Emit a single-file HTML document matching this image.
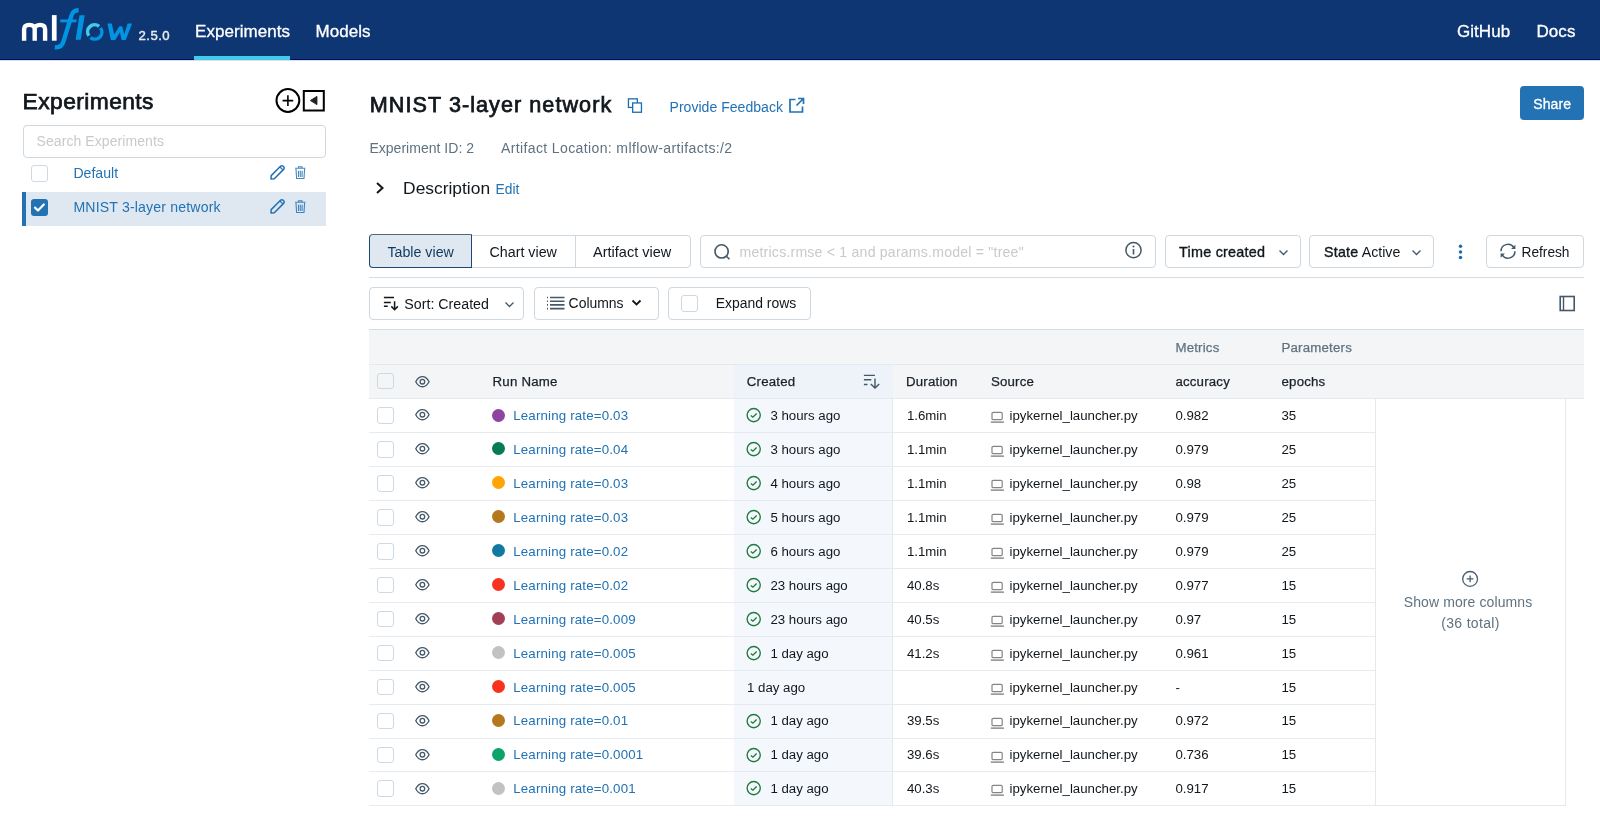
<!DOCTYPE html>
<html><head><meta charset="utf-8">
<style>
html,body{margin:0;padding:0;width:1600px;height:827px;overflow:hidden;background:#fff;}
body{will-change:transform;font-family:"Liberation Sans", sans-serif;position:relative;}
.t{position:absolute;line-height:1;white-space:nowrap;}
.b{position:absolute;box-sizing:border-box;}
svg{position:absolute;overflow:visible;}
</style></head><body>
<div class="b" style="left:0px;top:0px;width:1600px;height:60px;background:#0d3673;"></div>
<div class="b" style="left:0px;top:59px;width:1600px;height:1px;background:#020f62;"></div>
<div class="b" style="left:0px;top:60px;width:1600px;height:1px;background:#d9dee6;"></div>
<svg style="left:0;top:0" width="200" height="60" viewBox="0 0 200 60">
<path d="M24.1 40.7 V29.3 C24.1 26.4 26.2 24.9 29.3 24.9 C32.5 24.9 34.7 26.4 34.7 29.3 V40.7 M34.7 29.3 C34.7 26.4 36.9 24.9 40 24.9 C43.1 24.9 45.1 26.4 45.1 29.3 V40.7" fill="none" stroke="#fff" stroke-width="4.4"/>
<rect x="51.9" y="15.1" width="4.7" height="25.6" fill="#fff"/>
<g fill="none" stroke="#0194e2">
<path d="M54.8 47.3 C59.5 47.8 62.3 45.8 63.6 41 L71.3 16.2 C72.6 11.8 74.3 10.2 78.6 10.3" stroke-width="4.4"/>
<path d="M60.2 20.9 H76.4" stroke-width="2.9"/>
</g>
<polygon points="79.5,15.2 84.7,15.2 80.7,39.8 75.6,39.8" fill="#0194e2"/>
<polygon points="107.4,23.5 111.8,23.5 114.2,34.6 119.4,26.2 122.2,26.2 124.3,34.6 127.6,23.5 132.1,23.5 125.8,40 121.6,40 119.9,32.2 115.3,40 110.9,40" fill="#0194e2"/>
<g fill="none" stroke-width="3.5">
<path d="M99.1 26.4 A7 7 0 0 0 88.9 35.8" stroke="#43c9ed"/>
<path d="M90.5 37.6 A7 7 0 0 0 100.5 28" stroke="#0194e2"/>
</g>
</svg>
<div class="t" style="left:138.5px;top:29.43px;font-size:13.2px;color:#e8ecf1;letter-spacing:0.45px;-webkit-text-stroke:0.4px #e8ecf1;">2.5.0</div>
<div class="t" style="left:195px;top:23.11px;font-size:17.0px;color:#ffffff;letter-spacing:0.05px;-webkit-text-stroke:0.3px #ffffff;">Experiments</div>
<div class="b" style="left:194px;top:56px;width:96px;height:4px;background:#43c9ed;"></div>
<div class="t" style="left:315.5px;top:23.11px;font-size:17.0px;color:#ffffff;letter-spacing:0.05px;-webkit-text-stroke:0.3px #ffffff;">Models</div>
<div class="t" style="left:1457px;top:23.11px;font-size:17.0px;color:#ffffff;letter-spacing:0.05px;-webkit-text-stroke:0.3px #ffffff;">GitHub</div>
<div class="t" style="left:1536.5px;top:23.11px;font-size:17.0px;color:#ffffff;letter-spacing:0.05px;-webkit-text-stroke:0.3px #ffffff;">Docs</div>
<div class="t" style="left:22.6px;top:90.30px;font-size:22.8px;color:#11171c;letter-spacing:0.42px;-webkit-text-stroke:0.75px #11171c;">Experiments</div>
<svg style="left:270px;top:84px" width="60" height="32" viewBox="270 84 60 32">
<circle cx="287.9" cy="100.5" r="11.4" fill="none" stroke="#000" stroke-width="2"/>
<path d="M282.6 100.6 H293.2 M287.9 95.3 V106" stroke="#000" stroke-width="1.6"/>
<rect x="303.8" y="91" width="20" height="19.5" fill="none" stroke="#000" stroke-width="2"/>
<path d="M317 96.3 L310.3 100.5 L317 104.7 Z" fill="#222" stroke="#222" stroke-width="0.8" stroke-linejoin="round"/>
</svg>
<div class="b" style="left:22.5px;top:124.5px;width:303.5px;height:33px;border:1px solid #cdd8e1;border-radius:4px;"></div>
<div class="t" style="left:36.5px;top:134.15px;font-size:14px;color:#c9c9c9;letter-spacing:0.08px;">Search Experiments</div>
<div class="b" style="left:31px;top:165px;width:16.5px;height:16.5px;border:1px solid #cdd9e4;border-radius:3px;background:#fff;"></div>
<div class="t" style="left:73.4px;top:165.86px;font-size:14.1px;color:#2272b4;">Default</div>
<div class="b" style="left:22px;top:192px;width:304px;height:33.5px;background:#dfe8f1;border-left:4px solid #2272b4;"></div>
<div class="b" style="left:31px;top:199px;width:16.5px;height:16.5px;background:#2272b4;border-radius:3px;"></div>
<svg style="left:31px;top:199px" width="17" height="17" viewBox="0 0 17 17"><path d="M4 8.6 L7 11.5 L12.8 5.5" fill="none" stroke="#fff" stroke-width="2.2" stroke-linecap="round" stroke-linejoin="round"/></svg>
<div class="t" style="left:73.4px;top:200.16px;font-size:14.1px;color:#2272b4;letter-spacing:0.17px;">MNIST 3-layer network</div>
<svg style="left:268px;top:164px" width="40" height="18" viewBox="0 0 40 18">
<path d="M3.2 11.6 L12.5 2.3 A1.9 1.9 0 0 1 15.2 2.3 L15.6 2.7 A1.9 1.9 0 0 1 15.6 5.4 L6.3 14.7 L3 15 Z" fill="none" stroke="#2272b4" stroke-width="1.5" stroke-linejoin="round"/>
<path d="M12 3 L14.8 5.8" stroke="#2272b4" stroke-width="1.2"/>
<path d="M27 4.2 H37.5 M30.5 4 V2.8 H34 V4 M28 5 L28.6 14.5 H36 L36.6 5 M30.5 6.8 V13 M32.3 6.8 V13 M34.1 6.8 V13" fill="none" stroke="#2272b4" stroke-width="1.1" opacity="0.85"/>
</svg>
<svg style="left:268px;top:197.8px" width="40" height="18" viewBox="0 0 40 18">
<path d="M3.2 11.6 L12.5 2.3 A1.9 1.9 0 0 1 15.2 2.3 L15.6 2.7 A1.9 1.9 0 0 1 15.6 5.4 L6.3 14.7 L3 15 Z" fill="none" stroke="#2272b4" stroke-width="1.5" stroke-linejoin="round"/>
<path d="M12 3 L14.8 5.8" stroke="#2272b4" stroke-width="1.2"/>
<path d="M27 4.2 H37.5 M30.5 4 V2.8 H34 V4 M28 5 L28.6 14.5 H36 L36.6 5 M30.5 6.8 V13 M32.3 6.8 V13 M34.1 6.8 V13" fill="none" stroke="#2272b4" stroke-width="1.1" opacity="0.85"/>
</svg>
<div class="t" style="left:369.8px;top:93.92px;font-size:21.6px;color:#11171c;letter-spacing:1.05px;-webkit-text-stroke:0.75px #11171c;">MNIST 3-layer network</div>
<svg style="left:626px;top:97px" width="18" height="18" viewBox="0 0 18 18">
<rect x="2.45" y="1.85" width="8.9" height="8.6" fill="none" stroke="#1b6db3" stroke-width="1.3"/>
<rect x="6.65" y="5.95" width="8.8" height="9.3" fill="#fff" stroke="#1b6db3" stroke-width="1.3"/>
</svg>
<div class="t" style="left:669.5px;top:99.88px;font-size:14.08px;color:#2272b4;">Provide Feedback</div>
<svg style="left:788px;top:97px" width="18" height="18" viewBox="0 0 18 18">
<path d="M7.5 2.5 H2 V15 H14.5 V9.5" fill="none" stroke="#2272b4" stroke-width="1.7"/>
<path d="M8.5 8.5 L15.5 1.5 M10 1.5 H15.5 V7" fill="none" stroke="#2272b4" stroke-width="1.7"/>
</svg>
<div class="b" style="left:1520px;top:86px;width:64px;height:33.5px;background:#2272b4;border-radius:4px;"></div>
<div class="t" style="left:1533.2px;top:96.55px;font-size:14.0px;color:#ffffff;letter-spacing:0.15px;-webkit-text-stroke:0.3px #ffffff;">Share</div>
<div class="t" style="left:369.4px;top:140.91px;font-size:14.05px;color:#5f7281;">Experiment ID: 2</div>
<div class="t" style="left:501px;top:140.91px;font-size:14.05px;color:#5f7281;letter-spacing:0.36px;">Artifact Location: mlflow-artifacts:/2</div>
<svg style="left:372px;top:180px" width="16" height="16" viewBox="0 0 16 16"><path d="M5 3 L10.5 8 L5 13" fill="none" stroke="#11171c" stroke-width="2"/></svg>
<div class="t" style="left:403.1px;top:180.27px;font-size:17.4px;color:#11171c;">Description</div>
<div class="t" style="left:495.6px;top:183.32px;font-size:13.8px;color:#2272b4;">Edit</div>
<div class="b" style="left:369px;top:234.5px;width:322px;height:33.5px;border:1px solid #cdd8e1;border-radius:4px;"></div>
<div class="b" style="left:575px;top:234.5px;width:1px;height:33.5px;background:#cdd8e1;"></div>
<div class="b" style="left:369px;top:234.2px;width:103px;height:33.8px;background:#dfe8f1;border:1.5px solid #1b4a74;border-top:1.8px solid #56677a;border-radius:4px 0 0 4px;"></div>
<div class="t" style="left:387.4px;top:244.95px;font-size:14.24px;color:#0e3a5f;">Table view</div>
<div class="t" style="left:489.5px;top:244.92px;font-size:14.27px;color:#11171c;">Chart view</div>
<div class="t" style="left:593.1px;top:244.73px;font-size:14.5px;color:#11171c;">Artifact view</div>
<div class="b" style="left:700.4px;top:234.5px;width:455.3px;height:33.5px;border:1px solid #cdd8e1;border-radius:4px;"></div>
<svg style="left:712px;top:242px" width="20" height="20" viewBox="0 0 20 20"><circle cx="9.6" cy="9.4" r="6.6" fill="none" stroke="#445868" stroke-width="1.6"/><path d="M14.3 14.2 L17.5 17.3" stroke="#445868" stroke-width="1.6"/></svg>
<div class="t" style="left:739.5px;top:244.76px;font-size:14.1px;color:#c9c9c9;letter-spacing:0.21px;">metrics.rmse &lt; 1 and params.model = "tree"</div>
<svg style="left:1124px;top:241px" width="20" height="20" viewBox="0 0 20 20"><circle cx="9.5" cy="9.2" r="7.6" fill="none" stroke="#445868" stroke-width="1.5"/><path d="M9.5 8 V13.5" stroke="#445868" stroke-width="1.6"/><circle cx="9.5" cy="5.6" r="1" fill="#445868"/></svg>
<div class="b" style="left:1164.7px;top:234.5px;width:136px;height:33.5px;border:1px solid #cdd8e1;border-radius:4px;"></div>
<div class="t" style="left:1179.1px;top:244.81px;font-size:14.4px;color:#11171c;letter-spacing:0.22px;-webkit-text-stroke:0.35px #11171c;">Time created</div>
<svg style="left:1277.5px;top:248.5px" width="12" height="8" viewBox="0 0 12 8"><path d="M1.5 1.5 L5.5 5.5 L9.5 1.5" fill="none" stroke="#445868" stroke-width="1.3"/></svg>
<div class="b" style="left:1309.3px;top:234.5px;width:124.5px;height:33.5px;border:1px solid #cdd8e1;border-radius:4px;"></div>
<div class="t" style="left:1323.9px;top:244.98px;font-size:14.2px;color:#11171c;"><span style="-webkit-text-stroke:0.35px #11171c;letter-spacing:0.3px">State</span> Active</div>
<svg style="left:1411px;top:248.5px" width="12" height="8" viewBox="0 0 12 8"><path d="M1.5 1.5 L5.5 5.5 L9.5 1.5" fill="none" stroke="#445868" stroke-width="1.3"/></svg>
<svg style="left:1455px;top:242px" width="10" height="20" viewBox="0 0 10 20"><circle cx="5.5" cy="4.25" r="1.75" fill="#1b6db3"/><circle cx="5.5" cy="9.9" r="1.75" fill="#1b6db3"/><circle cx="5.5" cy="15.4" r="1.75" fill="#1b6db3"/></svg>
<div class="b" style="left:1486.2px;top:234.5px;width:97.5px;height:33.5px;border:1px solid #cdd8e1;border-radius:4px;"></div>
<svg style="left:1499px;top:242px" width="20" height="20" viewBox="0 0 20 20"><path d="M2 9.25 A7 7 0 0 1 14.9 5.6" fill="none" stroke="#445868" stroke-width="1.5"/><polygon points="16.4,2.7 16.4,7 12.1,7" fill="#445868"/><path d="M16 9.25 A7 7 0 0 1 3.1 12.9" fill="none" stroke="#445868" stroke-width="1.5"/><polygon points="1.6,15.8 1.6,11.5 5.9,11.5" fill="#445868"/></svg>
<div class="t" style="left:1521.5px;top:246.39px;font-size:13.71px;color:#11171c;">Refresh</div>
<div class="b" style="left:369px;top:276.5px;width:1215px;height:1.5px;background:#d5dde4;"></div>
<div class="b" style="left:369.2px;top:286.6px;width:155px;height:33px;border:1px solid #cdd8e1;border-radius:4px;"></div>
<svg style="left:382px;top:295px" width="20" height="18" viewBox="0 0 20 18"><path d="M1.9 2.5 H12 M1.9 7.4 H8.8 M1.9 11.3 H5.7" stroke="#11171c" stroke-width="1.5"/><path d="M12.6 6.3 V14.6 M9.3 11.4 L12.6 14.7 L15.9 11.4" fill="none" stroke="#11171c" stroke-width="1.5"/></svg>
<div class="t" style="left:404.3px;top:297.15px;font-size:14.24px;color:#11171c;">Sort: Created</div>
<svg style="left:503.5px;top:301px" width="12" height="8" viewBox="0 0 12 8"><path d="M1.5 1.5 L5.5 5.5 L9.5 1.5" fill="none" stroke="#445868" stroke-width="1.3"/></svg>
<div class="b" style="left:533.6px;top:286.6px;width:125px;height:33px;border:1px solid #cdd8e1;border-radius:4px;"></div>
<svg style="left:546px;top:296px" width="20" height="15" viewBox="0 0 20 15"><path d="M4 1.5 H18.5 M4 5.2 H18.5 M4 8.9 H18.5 M4 12.6 H18.5" stroke="#445868" stroke-width="1.6"/><path d="M1 1.5 H2 M1 5.2 H2 M1 8.9 H2 M1 12.6 H2" stroke="#445868" stroke-width="1.6"/></svg>
<div class="t" style="left:568.6px;top:296.60px;font-size:13.94px;color:#11171c;">Columns</div>
<svg style="left:630.5px;top:298.5px" width="12" height="8" viewBox="0 0 12 8"><path d="M1.5 1.5 L5.5 5.5 L9.5 1.5" fill="none" stroke="#11171c" stroke-width="1.8"/></svg>
<div class="b" style="left:667.7px;top:286.6px;width:143px;height:33px;border:1px solid #cdd8e1;border-radius:4px;"></div>
<div class="b" style="left:681.1px;top:295px;width:16.7px;height:16.5px;border:1px solid #cdd8e1;border-radius:3px;"></div>
<div class="t" style="left:715.8px;top:296.63px;font-size:13.91px;color:#11171c;">Expand rows</div>
<svg style="left:1558px;top:294px" width="18" height="18" viewBox="0 0 18 18"><rect x="2.2" y="2.5" width="14" height="14" fill="none" stroke="#445868" stroke-width="1.6"/><path d="M5.5 2.5 V16.5" stroke="#445868" stroke-width="1.4"/></svg>
<div class="b" style="left:369px;top:329px;width:1215px;height:1.5px;background:#d5dde4;"></div>
<div class="b" style="left:369px;top:330px;width:1215px;height:68.5px;background:#f3f5f7;"></div>
<div class="b" style="left:369px;top:364px;width:1215px;height:1px;background:#e3e9ee;"></div>
<div class="b" style="left:733.7px;top:364.5px;width:159px;height:34px;background:#eef3f9;"></div>
<div class="b" style="left:369px;top:398px;width:1215px;height:1px;background:#e3e9ee;"></div>
<div class="t" style="left:1175.4px;top:340.98px;font-size:13.25px;color:#5f7281;letter-spacing:0.2px;-webkit-text-stroke:0.25px #5f7281;">Metrics</div>
<div class="t" style="left:1281.5px;top:340.98px;font-size:13.25px;color:#5f7281;letter-spacing:0.2px;-webkit-text-stroke:0.25px #5f7281;">Parameters</div>
<div class="b" style="left:377.2px;top:373px;width:16.6px;height:16.4px;border:1px solid #cdd9e4;border-radius:3px;background:#f3f5f7;"></div>
<svg style="left:415.2px;top:375.9px" width="16" height="13" viewBox="0 0 16 13"><path d="M0.75 5.7 C2.5 2.3 4.8 0.65 7.4 0.65 C10 0.65 12.3 2.3 14.05 5.7 C12.3 9.1 10 10.75 7.4 10.75 C4.8 10.75 2.5 9.1 0.75 5.7 Z" fill="none" stroke="#445868" stroke-width="1.3"/><circle cx="7.4" cy="5.7" r="2.3" fill="none" stroke="#445868" stroke-width="1.3"/></svg>
<div class="t" style="left:492.6px;top:375.08px;font-size:13.25px;color:#1a2229;letter-spacing:0.2px;-webkit-text-stroke:0.25px #1a2229;">Run Name</div>
<div class="t" style="left:746.8px;top:375.08px;font-size:13.25px;color:#1a2229;letter-spacing:0.2px;-webkit-text-stroke:0.25px #1a2229;">Created</div>
<svg style="left:862px;top:373px" width="20" height="18" viewBox="0 0 20 18"><path d="M1.9 2.4 H12.9 M1.9 6.7 H9.3 M1.9 11.5 H5.5" stroke="#445868" stroke-width="1.4"/><path d="M13 5.6 V15 M8.8 11 L13 15.1 L17.2 11" fill="none" stroke="#445868" stroke-width="1.4"/></svg>
<div class="t" style="left:906px;top:375.08px;font-size:13.25px;color:#1a2229;letter-spacing:0.2px;-webkit-text-stroke:0.25px #1a2229;">Duration</div>
<div class="t" style="left:990.9px;top:375.08px;font-size:13.25px;color:#1a2229;letter-spacing:0.2px;-webkit-text-stroke:0.25px #1a2229;">Source</div>
<div class="t" style="left:1175.4px;top:375.08px;font-size:13.25px;color:#1a2229;letter-spacing:0.2px;-webkit-text-stroke:0.25px #1a2229;">accuracy</div>
<div class="t" style="left:1281.5px;top:375.08px;font-size:13.25px;color:#1a2229;letter-spacing:0.2px;-webkit-text-stroke:0.25px #1a2229;">epochs</div>
<div class="b" style="left:733.7px;top:398.5px;width:159px;height:407.3px;background:#f4f8fd;border-right:1px solid #e3e9ee;"></div>
<div class="b" style="left:369px;top:432.22px;width:1006px;height:1px;background:#e5ebef;"></div>
<div class="b" style="left:377.2px;top:407.3px;width:16.6px;height:16.6px;border:1px solid #cdd9e4;border-radius:3px;background:#fff;"></div>
<svg style="left:415.2px;top:409.40000000000003px" width="16" height="13" viewBox="0 0 16 13"><path d="M0.75 5.7 C2.5 2.3 4.8 0.65 7.4 0.65 C10 0.65 12.3 2.3 14.05 5.7 C12.3 9.1 10 10.75 7.4 10.75 C4.8 10.75 2.5 9.1 0.75 5.7 Z" fill="none" stroke="#445868" stroke-width="1.3"/><circle cx="7.4" cy="5.7" r="2.3" fill="none" stroke="#445868" stroke-width="1.3"/></svg>
<div class="b" style="left:491.7px;top:408.5px;width:13px;height:13px;background:#8e44a0;border-radius:50%;"></div>
<div class="t" style="left:513.2px;top:409.14px;font-size:13.3px;color:#2272b4;letter-spacing:0.17px;">Learning rate=0.03</div>
<svg style="left:745px;top:407.3px" width="17" height="17" viewBox="0 0 17 17"><circle cx="8.7" cy="8.1" r="6.6" fill="none" stroke="#1f7a3d" stroke-width="1.35"/><path d="M5.8 8.4 L7.9 10.2 L11.6 6.5" fill="none" stroke="#1f7a3d" stroke-width="1.35"/></svg>
<div class="t" style="left:770.4px;top:409.18px;font-size:13.25px;color:#11171c;">3 hours ago</div>
<div class="t" style="left:906.9px;top:409.18px;font-size:13.25px;color:#11171c;">1.6min</div>
<svg style="left:990px;top:411.3px" width="15" height="13" viewBox="0 0 15 13"><rect x="2" y="1.3" width="10.2" height="7.4" rx="1.3" fill="none" stroke="#858585" stroke-width="1.2"/><path d="M0.8 11.1 H13.9" stroke="#707070" stroke-width="1.2"/></svg>
<div class="t" style="left:1009.5px;top:409.18px;font-size:13.25px;color:#11171c;">ipykernel_launcher.py</div>
<div class="t" style="left:1175.4px;top:409.18px;font-size:13.25px;color:#11171c;">0.982</div>
<div class="t" style="left:1281.5px;top:409.18px;font-size:13.25px;color:#11171c;">35</div>
<div class="b" style="left:369px;top:466.14000000000004px;width:1006px;height:1px;background:#e5ebef;"></div>
<div class="b" style="left:377.2px;top:441.22px;width:16.6px;height:16.6px;border:1px solid #cdd9e4;border-radius:3px;background:#fff;"></div>
<svg style="left:415.2px;top:443.32000000000005px" width="16" height="13" viewBox="0 0 16 13"><path d="M0.75 5.7 C2.5 2.3 4.8 0.65 7.4 0.65 C10 0.65 12.3 2.3 14.05 5.7 C12.3 9.1 10 10.75 7.4 10.75 C4.8 10.75 2.5 9.1 0.75 5.7 Z" fill="none" stroke="#445868" stroke-width="1.3"/><circle cx="7.4" cy="5.7" r="2.3" fill="none" stroke="#445868" stroke-width="1.3"/></svg>
<div class="b" style="left:491.7px;top:442.42px;width:13px;height:13px;background:#077a56;border-radius:50%;"></div>
<div class="t" style="left:513.2px;top:443.06px;font-size:13.3px;color:#2272b4;letter-spacing:0.17px;">Learning rate=0.04</div>
<svg style="left:745px;top:441.22px" width="17" height="17" viewBox="0 0 17 17"><circle cx="8.7" cy="8.1" r="6.6" fill="none" stroke="#1f7a3d" stroke-width="1.35"/><path d="M5.8 8.4 L7.9 10.2 L11.6 6.5" fill="none" stroke="#1f7a3d" stroke-width="1.35"/></svg>
<div class="t" style="left:770.4px;top:443.10px;font-size:13.25px;color:#11171c;">3 hours ago</div>
<div class="t" style="left:906.9px;top:443.10px;font-size:13.25px;color:#11171c;">1.1min</div>
<svg style="left:990px;top:445.22px" width="15" height="13" viewBox="0 0 15 13"><rect x="2" y="1.3" width="10.2" height="7.4" rx="1.3" fill="none" stroke="#858585" stroke-width="1.2"/><path d="M0.8 11.1 H13.9" stroke="#707070" stroke-width="1.2"/></svg>
<div class="t" style="left:1009.5px;top:443.10px;font-size:13.25px;color:#11171c;">ipykernel_launcher.py</div>
<div class="t" style="left:1175.4px;top:443.10px;font-size:13.25px;color:#11171c;">0.979</div>
<div class="t" style="left:1281.5px;top:443.10px;font-size:13.25px;color:#11171c;">25</div>
<div class="b" style="left:369px;top:500.06px;width:1006px;height:1px;background:#e5ebef;"></div>
<div class="b" style="left:377.2px;top:475.14px;width:16.6px;height:16.6px;border:1px solid #cdd9e4;border-radius:3px;background:#fff;"></div>
<svg style="left:415.2px;top:477.24px" width="16" height="13" viewBox="0 0 16 13"><path d="M0.75 5.7 C2.5 2.3 4.8 0.65 7.4 0.65 C10 0.65 12.3 2.3 14.05 5.7 C12.3 9.1 10 10.75 7.4 10.75 C4.8 10.75 2.5 9.1 0.75 5.7 Z" fill="none" stroke="#445868" stroke-width="1.3"/><circle cx="7.4" cy="5.7" r="2.3" fill="none" stroke="#445868" stroke-width="1.3"/></svg>
<div class="b" style="left:491.7px;top:476.34px;width:13px;height:13px;background:#ffa500;border-radius:50%;"></div>
<div class="t" style="left:513.2px;top:476.98px;font-size:13.3px;color:#2272b4;letter-spacing:0.17px;">Learning rate=0.03</div>
<svg style="left:745px;top:475.14px" width="17" height="17" viewBox="0 0 17 17"><circle cx="8.7" cy="8.1" r="6.6" fill="none" stroke="#1f7a3d" stroke-width="1.35"/><path d="M5.8 8.4 L7.9 10.2 L11.6 6.5" fill="none" stroke="#1f7a3d" stroke-width="1.35"/></svg>
<div class="t" style="left:770.4px;top:477.02px;font-size:13.25px;color:#11171c;">4 hours ago</div>
<div class="t" style="left:906.9px;top:477.02px;font-size:13.25px;color:#11171c;">1.1min</div>
<svg style="left:990px;top:479.14px" width="15" height="13" viewBox="0 0 15 13"><rect x="2" y="1.3" width="10.2" height="7.4" rx="1.3" fill="none" stroke="#858585" stroke-width="1.2"/><path d="M0.8 11.1 H13.9" stroke="#707070" stroke-width="1.2"/></svg>
<div class="t" style="left:1009.5px;top:477.02px;font-size:13.25px;color:#11171c;">ipykernel_launcher.py</div>
<div class="t" style="left:1175.4px;top:477.02px;font-size:13.25px;color:#11171c;">0.98</div>
<div class="t" style="left:1281.5px;top:477.02px;font-size:13.25px;color:#11171c;">25</div>
<div class="b" style="left:369px;top:533.98px;width:1006px;height:1px;background:#e5ebef;"></div>
<div class="b" style="left:377.2px;top:509.06px;width:16.6px;height:16.6px;border:1px solid #cdd9e4;border-radius:3px;background:#fff;"></div>
<svg style="left:415.2px;top:511.16px" width="16" height="13" viewBox="0 0 16 13"><path d="M0.75 5.7 C2.5 2.3 4.8 0.65 7.4 0.65 C10 0.65 12.3 2.3 14.05 5.7 C12.3 9.1 10 10.75 7.4 10.75 C4.8 10.75 2.5 9.1 0.75 5.7 Z" fill="none" stroke="#445868" stroke-width="1.3"/><circle cx="7.4" cy="5.7" r="2.3" fill="none" stroke="#445868" stroke-width="1.3"/></svg>
<div class="b" style="left:491.7px;top:510.26px;width:13px;height:13px;background:#b5781f;border-radius:50%;"></div>
<div class="t" style="left:513.2px;top:510.90px;font-size:13.3px;color:#2272b4;letter-spacing:0.17px;">Learning rate=0.03</div>
<svg style="left:745px;top:509.06px" width="17" height="17" viewBox="0 0 17 17"><circle cx="8.7" cy="8.1" r="6.6" fill="none" stroke="#1f7a3d" stroke-width="1.35"/><path d="M5.8 8.4 L7.9 10.2 L11.6 6.5" fill="none" stroke="#1f7a3d" stroke-width="1.35"/></svg>
<div class="t" style="left:770.4px;top:510.94px;font-size:13.25px;color:#11171c;">5 hours ago</div>
<div class="t" style="left:906.9px;top:510.94px;font-size:13.25px;color:#11171c;">1.1min</div>
<svg style="left:990px;top:513.06px" width="15" height="13" viewBox="0 0 15 13"><rect x="2" y="1.3" width="10.2" height="7.4" rx="1.3" fill="none" stroke="#858585" stroke-width="1.2"/><path d="M0.8 11.1 H13.9" stroke="#707070" stroke-width="1.2"/></svg>
<div class="t" style="left:1009.5px;top:510.94px;font-size:13.25px;color:#11171c;">ipykernel_launcher.py</div>
<div class="t" style="left:1175.4px;top:510.94px;font-size:13.25px;color:#11171c;">0.979</div>
<div class="t" style="left:1281.5px;top:510.94px;font-size:13.25px;color:#11171c;">25</div>
<div class="b" style="left:369px;top:567.9px;width:1006px;height:1px;background:#e5ebef;"></div>
<div class="b" style="left:377.2px;top:542.98px;width:16.6px;height:16.6px;border:1px solid #cdd9e4;border-radius:3px;background:#fff;"></div>
<svg style="left:415.2px;top:545.08px" width="16" height="13" viewBox="0 0 16 13"><path d="M0.75 5.7 C2.5 2.3 4.8 0.65 7.4 0.65 C10 0.65 12.3 2.3 14.05 5.7 C12.3 9.1 10 10.75 7.4 10.75 C4.8 10.75 2.5 9.1 0.75 5.7 Z" fill="none" stroke="#445868" stroke-width="1.3"/><circle cx="7.4" cy="5.7" r="2.3" fill="none" stroke="#445868" stroke-width="1.3"/></svg>
<div class="b" style="left:491.7px;top:544.1800000000001px;width:13px;height:13px;background:#127aa0;border-radius:50%;"></div>
<div class="t" style="left:513.2px;top:544.82px;font-size:13.3px;color:#2272b4;letter-spacing:0.17px;">Learning rate=0.02</div>
<svg style="left:745px;top:542.98px" width="17" height="17" viewBox="0 0 17 17"><circle cx="8.7" cy="8.1" r="6.6" fill="none" stroke="#1f7a3d" stroke-width="1.35"/><path d="M5.8 8.4 L7.9 10.2 L11.6 6.5" fill="none" stroke="#1f7a3d" stroke-width="1.35"/></svg>
<div class="t" style="left:770.4px;top:544.86px;font-size:13.25px;color:#11171c;">6 hours ago</div>
<div class="t" style="left:906.9px;top:544.86px;font-size:13.25px;color:#11171c;">1.1min</div>
<svg style="left:990px;top:546.98px" width="15" height="13" viewBox="0 0 15 13"><rect x="2" y="1.3" width="10.2" height="7.4" rx="1.3" fill="none" stroke="#858585" stroke-width="1.2"/><path d="M0.8 11.1 H13.9" stroke="#707070" stroke-width="1.2"/></svg>
<div class="t" style="left:1009.5px;top:544.86px;font-size:13.25px;color:#11171c;">ipykernel_launcher.py</div>
<div class="t" style="left:1175.4px;top:544.86px;font-size:13.25px;color:#11171c;">0.979</div>
<div class="t" style="left:1281.5px;top:544.86px;font-size:13.25px;color:#11171c;">25</div>
<div class="b" style="left:369px;top:601.82px;width:1006px;height:1px;background:#e5ebef;"></div>
<div class="b" style="left:377.2px;top:576.9000000000001px;width:16.6px;height:16.6px;border:1px solid #cdd9e4;border-radius:3px;background:#fff;"></div>
<svg style="left:415.2px;top:579.0000000000001px" width="16" height="13" viewBox="0 0 16 13"><path d="M0.75 5.7 C2.5 2.3 4.8 0.65 7.4 0.65 C10 0.65 12.3 2.3 14.05 5.7 C12.3 9.1 10 10.75 7.4 10.75 C4.8 10.75 2.5 9.1 0.75 5.7 Z" fill="none" stroke="#445868" stroke-width="1.3"/><circle cx="7.4" cy="5.7" r="2.3" fill="none" stroke="#445868" stroke-width="1.3"/></svg>
<div class="b" style="left:491.7px;top:578.1000000000001px;width:13px;height:13px;background:#f9321f;border-radius:50%;"></div>
<div class="t" style="left:513.2px;top:578.74px;font-size:13.3px;color:#2272b4;letter-spacing:0.17px;">Learning rate=0.02</div>
<svg style="left:745px;top:576.9000000000001px" width="17" height="17" viewBox="0 0 17 17"><circle cx="8.7" cy="8.1" r="6.6" fill="none" stroke="#1f7a3d" stroke-width="1.35"/><path d="M5.8 8.4 L7.9 10.2 L11.6 6.5" fill="none" stroke="#1f7a3d" stroke-width="1.35"/></svg>
<div class="t" style="left:770.4px;top:578.78px;font-size:13.25px;color:#11171c;">23 hours ago</div>
<div class="t" style="left:906.9px;top:578.78px;font-size:13.25px;color:#11171c;">40.8s</div>
<svg style="left:990px;top:580.9000000000001px" width="15" height="13" viewBox="0 0 15 13"><rect x="2" y="1.3" width="10.2" height="7.4" rx="1.3" fill="none" stroke="#858585" stroke-width="1.2"/><path d="M0.8 11.1 H13.9" stroke="#707070" stroke-width="1.2"/></svg>
<div class="t" style="left:1009.5px;top:578.78px;font-size:13.25px;color:#11171c;">ipykernel_launcher.py</div>
<div class="t" style="left:1175.4px;top:578.78px;font-size:13.25px;color:#11171c;">0.977</div>
<div class="t" style="left:1281.5px;top:578.78px;font-size:13.25px;color:#11171c;">15</div>
<div class="b" style="left:369px;top:635.74px;width:1006px;height:1px;background:#e5ebef;"></div>
<div class="b" style="left:377.2px;top:610.82px;width:16.6px;height:16.6px;border:1px solid #cdd9e4;border-radius:3px;background:#fff;"></div>
<svg style="left:415.2px;top:612.9200000000001px" width="16" height="13" viewBox="0 0 16 13"><path d="M0.75 5.7 C2.5 2.3 4.8 0.65 7.4 0.65 C10 0.65 12.3 2.3 14.05 5.7 C12.3 9.1 10 10.75 7.4 10.75 C4.8 10.75 2.5 9.1 0.75 5.7 Z" fill="none" stroke="#445868" stroke-width="1.3"/><circle cx="7.4" cy="5.7" r="2.3" fill="none" stroke="#445868" stroke-width="1.3"/></svg>
<div class="b" style="left:491.7px;top:612.0200000000001px;width:13px;height:13px;background:#a33f55;border-radius:50%;"></div>
<div class="t" style="left:513.2px;top:612.66px;font-size:13.3px;color:#2272b4;letter-spacing:0.17px;">Learning rate=0.009</div>
<svg style="left:745px;top:610.82px" width="17" height="17" viewBox="0 0 17 17"><circle cx="8.7" cy="8.1" r="6.6" fill="none" stroke="#1f7a3d" stroke-width="1.35"/><path d="M5.8 8.4 L7.9 10.2 L11.6 6.5" fill="none" stroke="#1f7a3d" stroke-width="1.35"/></svg>
<div class="t" style="left:770.4px;top:612.70px;font-size:13.25px;color:#11171c;">23 hours ago</div>
<div class="t" style="left:906.9px;top:612.70px;font-size:13.25px;color:#11171c;">40.5s</div>
<svg style="left:990px;top:614.82px" width="15" height="13" viewBox="0 0 15 13"><rect x="2" y="1.3" width="10.2" height="7.4" rx="1.3" fill="none" stroke="#858585" stroke-width="1.2"/><path d="M0.8 11.1 H13.9" stroke="#707070" stroke-width="1.2"/></svg>
<div class="t" style="left:1009.5px;top:612.70px;font-size:13.25px;color:#11171c;">ipykernel_launcher.py</div>
<div class="t" style="left:1175.4px;top:612.70px;font-size:13.25px;color:#11171c;">0.97</div>
<div class="t" style="left:1281.5px;top:612.70px;font-size:13.25px;color:#11171c;">15</div>
<div class="b" style="left:369px;top:669.66px;width:1006px;height:1px;background:#e5ebef;"></div>
<div class="b" style="left:377.2px;top:644.74px;width:16.6px;height:16.6px;border:1px solid #cdd9e4;border-radius:3px;background:#fff;"></div>
<svg style="left:415.2px;top:646.84px" width="16" height="13" viewBox="0 0 16 13"><path d="M0.75 5.7 C2.5 2.3 4.8 0.65 7.4 0.65 C10 0.65 12.3 2.3 14.05 5.7 C12.3 9.1 10 10.75 7.4 10.75 C4.8 10.75 2.5 9.1 0.75 5.7 Z" fill="none" stroke="#445868" stroke-width="1.3"/><circle cx="7.4" cy="5.7" r="2.3" fill="none" stroke="#445868" stroke-width="1.3"/></svg>
<div class="b" style="left:491.7px;top:645.94px;width:13px;height:13px;background:#c2c2c2;border-radius:50%;"></div>
<div class="t" style="left:513.2px;top:646.58px;font-size:13.3px;color:#2272b4;letter-spacing:0.17px;">Learning rate=0.005</div>
<svg style="left:745px;top:644.74px" width="17" height="17" viewBox="0 0 17 17"><circle cx="8.7" cy="8.1" r="6.6" fill="none" stroke="#1f7a3d" stroke-width="1.35"/><path d="M5.8 8.4 L7.9 10.2 L11.6 6.5" fill="none" stroke="#1f7a3d" stroke-width="1.35"/></svg>
<div class="t" style="left:770.4px;top:646.62px;font-size:13.25px;color:#11171c;">1 day ago</div>
<div class="t" style="left:906.9px;top:646.62px;font-size:13.25px;color:#11171c;">41.2s</div>
<svg style="left:990px;top:648.74px" width="15" height="13" viewBox="0 0 15 13"><rect x="2" y="1.3" width="10.2" height="7.4" rx="1.3" fill="none" stroke="#858585" stroke-width="1.2"/><path d="M0.8 11.1 H13.9" stroke="#707070" stroke-width="1.2"/></svg>
<div class="t" style="left:1009.5px;top:646.62px;font-size:13.25px;color:#11171c;">ipykernel_launcher.py</div>
<div class="t" style="left:1175.4px;top:646.62px;font-size:13.25px;color:#11171c;">0.961</div>
<div class="t" style="left:1281.5px;top:646.62px;font-size:13.25px;color:#11171c;">15</div>
<div class="b" style="left:369px;top:703.58px;width:1006px;height:1px;background:#e5ebef;"></div>
<div class="b" style="left:377.2px;top:678.6600000000001px;width:16.6px;height:16.6px;border:1px solid #cdd9e4;border-radius:3px;background:#fff;"></div>
<svg style="left:415.2px;top:680.7600000000001px" width="16" height="13" viewBox="0 0 16 13"><path d="M0.75 5.7 C2.5 2.3 4.8 0.65 7.4 0.65 C10 0.65 12.3 2.3 14.05 5.7 C12.3 9.1 10 10.75 7.4 10.75 C4.8 10.75 2.5 9.1 0.75 5.7 Z" fill="none" stroke="#445868" stroke-width="1.3"/><circle cx="7.4" cy="5.7" r="2.3" fill="none" stroke="#445868" stroke-width="1.3"/></svg>
<div class="b" style="left:491.7px;top:679.8600000000001px;width:13px;height:13px;background:#f9321f;border-radius:50%;"></div>
<div class="t" style="left:513.2px;top:680.50px;font-size:13.3px;color:#2272b4;letter-spacing:0.17px;">Learning rate=0.005</div>
<div class="t" style="left:747px;top:680.54px;font-size:13.25px;color:#11171c;">1 day ago</div>
<svg style="left:990px;top:682.6600000000001px" width="15" height="13" viewBox="0 0 15 13"><rect x="2" y="1.3" width="10.2" height="7.4" rx="1.3" fill="none" stroke="#858585" stroke-width="1.2"/><path d="M0.8 11.1 H13.9" stroke="#707070" stroke-width="1.2"/></svg>
<div class="t" style="left:1009.5px;top:680.54px;font-size:13.25px;color:#11171c;">ipykernel_launcher.py</div>
<div class="t" style="left:1175.4px;top:680.54px;font-size:13.25px;color:#11171c;">-</div>
<div class="t" style="left:1281.5px;top:680.54px;font-size:13.25px;color:#11171c;">15</div>
<div class="b" style="left:369px;top:737.5px;width:1006px;height:1px;background:#e5ebef;"></div>
<div class="b" style="left:377.2px;top:712.58px;width:16.6px;height:16.6px;border:1px solid #cdd9e4;border-radius:3px;background:#fff;"></div>
<svg style="left:415.2px;top:714.6800000000001px" width="16" height="13" viewBox="0 0 16 13"><path d="M0.75 5.7 C2.5 2.3 4.8 0.65 7.4 0.65 C10 0.65 12.3 2.3 14.05 5.7 C12.3 9.1 10 10.75 7.4 10.75 C4.8 10.75 2.5 9.1 0.75 5.7 Z" fill="none" stroke="#445868" stroke-width="1.3"/><circle cx="7.4" cy="5.7" r="2.3" fill="none" stroke="#445868" stroke-width="1.3"/></svg>
<div class="b" style="left:491.7px;top:713.7800000000001px;width:13px;height:13px;background:#b5781f;border-radius:50%;"></div>
<div class="t" style="left:513.2px;top:714.42px;font-size:13.3px;color:#2272b4;letter-spacing:0.17px;">Learning rate=0.01</div>
<svg style="left:745px;top:712.58px" width="17" height="17" viewBox="0 0 17 17"><circle cx="8.7" cy="8.1" r="6.6" fill="none" stroke="#1f7a3d" stroke-width="1.35"/><path d="M5.8 8.4 L7.9 10.2 L11.6 6.5" fill="none" stroke="#1f7a3d" stroke-width="1.35"/></svg>
<div class="t" style="left:770.4px;top:714.46px;font-size:13.25px;color:#11171c;">1 day ago</div>
<div class="t" style="left:906.9px;top:714.46px;font-size:13.25px;color:#11171c;">39.5s</div>
<svg style="left:990px;top:716.58px" width="15" height="13" viewBox="0 0 15 13"><rect x="2" y="1.3" width="10.2" height="7.4" rx="1.3" fill="none" stroke="#858585" stroke-width="1.2"/><path d="M0.8 11.1 H13.9" stroke="#707070" stroke-width="1.2"/></svg>
<div class="t" style="left:1009.5px;top:714.46px;font-size:13.25px;color:#11171c;">ipykernel_launcher.py</div>
<div class="t" style="left:1175.4px;top:714.46px;font-size:13.25px;color:#11171c;">0.972</div>
<div class="t" style="left:1281.5px;top:714.46px;font-size:13.25px;color:#11171c;">15</div>
<div class="b" style="left:369px;top:771.42px;width:1006px;height:1px;background:#e5ebef;"></div>
<div class="b" style="left:377.2px;top:746.5px;width:16.6px;height:16.6px;border:1px solid #cdd9e4;border-radius:3px;background:#fff;"></div>
<svg style="left:415.2px;top:748.6px" width="16" height="13" viewBox="0 0 16 13"><path d="M0.75 5.7 C2.5 2.3 4.8 0.65 7.4 0.65 C10 0.65 12.3 2.3 14.05 5.7 C12.3 9.1 10 10.75 7.4 10.75 C4.8 10.75 2.5 9.1 0.75 5.7 Z" fill="none" stroke="#445868" stroke-width="1.3"/><circle cx="7.4" cy="5.7" r="2.3" fill="none" stroke="#445868" stroke-width="1.3"/></svg>
<div class="b" style="left:491.7px;top:747.7px;width:13px;height:13px;background:#0ba56c;border-radius:50%;"></div>
<div class="t" style="left:513.2px;top:748.34px;font-size:13.3px;color:#2272b4;letter-spacing:0.17px;">Learning rate=0.0001</div>
<svg style="left:745px;top:746.5px" width="17" height="17" viewBox="0 0 17 17"><circle cx="8.7" cy="8.1" r="6.6" fill="none" stroke="#1f7a3d" stroke-width="1.35"/><path d="M5.8 8.4 L7.9 10.2 L11.6 6.5" fill="none" stroke="#1f7a3d" stroke-width="1.35"/></svg>
<div class="t" style="left:770.4px;top:748.38px;font-size:13.25px;color:#11171c;">1 day ago</div>
<div class="t" style="left:906.9px;top:748.38px;font-size:13.25px;color:#11171c;">39.6s</div>
<svg style="left:990px;top:750.5px" width="15" height="13" viewBox="0 0 15 13"><rect x="2" y="1.3" width="10.2" height="7.4" rx="1.3" fill="none" stroke="#858585" stroke-width="1.2"/><path d="M0.8 11.1 H13.9" stroke="#707070" stroke-width="1.2"/></svg>
<div class="t" style="left:1009.5px;top:748.38px;font-size:13.25px;color:#11171c;">ipykernel_launcher.py</div>
<div class="t" style="left:1175.4px;top:748.38px;font-size:13.25px;color:#11171c;">0.736</div>
<div class="t" style="left:1281.5px;top:748.38px;font-size:13.25px;color:#11171c;">15</div>
<div class="b" style="left:369px;top:805.34px;width:1006px;height:1px;background:#e5ebef;"></div>
<div class="b" style="left:377.2px;top:780.4200000000001px;width:16.6px;height:16.6px;border:1px solid #cdd9e4;border-radius:3px;background:#fff;"></div>
<svg style="left:415.2px;top:782.5200000000001px" width="16" height="13" viewBox="0 0 16 13"><path d="M0.75 5.7 C2.5 2.3 4.8 0.65 7.4 0.65 C10 0.65 12.3 2.3 14.05 5.7 C12.3 9.1 10 10.75 7.4 10.75 C4.8 10.75 2.5 9.1 0.75 5.7 Z" fill="none" stroke="#445868" stroke-width="1.3"/><circle cx="7.4" cy="5.7" r="2.3" fill="none" stroke="#445868" stroke-width="1.3"/></svg>
<div class="b" style="left:491.7px;top:781.6200000000001px;width:13px;height:13px;background:#c2c2c2;border-radius:50%;"></div>
<div class="t" style="left:513.2px;top:782.26px;font-size:13.3px;color:#2272b4;letter-spacing:0.17px;">Learning rate=0.001</div>
<svg style="left:745px;top:780.4200000000001px" width="17" height="17" viewBox="0 0 17 17"><circle cx="8.7" cy="8.1" r="6.6" fill="none" stroke="#1f7a3d" stroke-width="1.35"/><path d="M5.8 8.4 L7.9 10.2 L11.6 6.5" fill="none" stroke="#1f7a3d" stroke-width="1.35"/></svg>
<div class="t" style="left:770.4px;top:782.30px;font-size:13.25px;color:#11171c;">1 day ago</div>
<div class="t" style="left:906.9px;top:782.30px;font-size:13.25px;color:#11171c;">40.3s</div>
<svg style="left:990px;top:784.4200000000001px" width="15" height="13" viewBox="0 0 15 13"><rect x="2" y="1.3" width="10.2" height="7.4" rx="1.3" fill="none" stroke="#858585" stroke-width="1.2"/><path d="M0.8 11.1 H13.9" stroke="#707070" stroke-width="1.2"/></svg>
<div class="t" style="left:1009.5px;top:782.30px;font-size:13.25px;color:#11171c;">ipykernel_launcher.py</div>
<div class="t" style="left:1175.4px;top:782.30px;font-size:13.25px;color:#11171c;">0.917</div>
<div class="t" style="left:1281.5px;top:782.30px;font-size:13.25px;color:#11171c;">15</div>
<div class="b" style="left:1375px;top:398.5px;width:190.5px;height:407.3px;border-left:1px solid #e3e9ee;border-right:1px solid #e3e9ee;border-bottom:1px solid #e3e9ee;"></div>
<div class="b" style="left:369px;top:805px;width:1006px;height:1px;background:#e5ebef;"></div>
<svg style="left:1460px;top:569px" width="20" height="20" viewBox="0 0 20 20"><circle cx="10.1" cy="9.9" r="7.4" fill="none" stroke="#4a5e6e" stroke-width="1.3"/><path d="M6.7 9.9 H13.5 M10.1 6.5 V13.3" stroke="#4a5e6e" stroke-width="1.3"/></svg>
<div class="t" style="left:1403.8px;top:594.85px;font-size:14.0px;color:#5f7281;letter-spacing:0.1px;">Show more columns</div>
<div class="t" style="left:1441.2px;top:615.75px;font-size:14.0px;color:#5f7281;letter-spacing:0.33px;">(36 total)</div>
</body></html>
